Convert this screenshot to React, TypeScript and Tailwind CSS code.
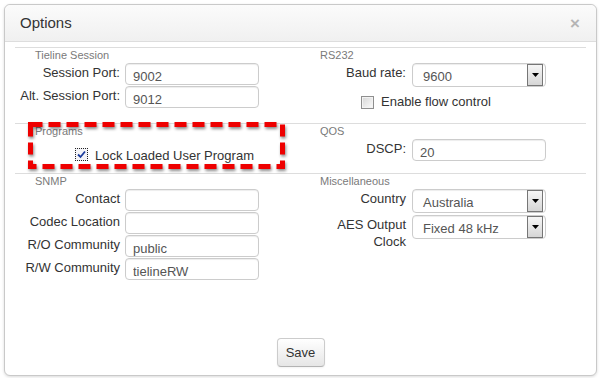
import type { ReactNode } from "react";

function SectionLabel({ children }: { children: ReactNode }) {
  return (
    <div className="h-[13px] pl-[20px] text-[11px] leading-[13px] text-[#7a7a7a]">
      {children}
    </div>
  );
}

function TextField({ label, value = "", wide = false }: { label: string; value?: string; wide?: boolean }) {
  return (
    <div className="mb-px flex items-start">
      <div
        className={
          (wide ? "w-[106px] " : "w-[105px] ") +
          "whitespace-nowrap pt-px text-right text-[13px] leading-[17px] text-[#333]"
        }
      >
        {label}
      </div>
      <input
        readOnly
        value={value}
        className={
          (wide ? "ml-[6px] " : "ml-[5px] ") +
          "h-[22px] w-[134px] rounded-[4px] border border-[#cccccc] bg-white px-[7px] pt-[4px] text-[13px] text-[#555] shadow-[inset_0_1px_1px_rgba(0,0,0,0.075)] outline-none"
        }
      />
    </div>
  );
}

function SelectField({ label, value }: { label: ReactNode; value: string }) {
  return (
    <div className="mb-[2px] flex items-start">
      <div className="w-[106px] pt-px text-right text-[13px] leading-[17px] text-[#333]">{label}</div>
      <div className="relative ml-[6px] flex h-[24px] w-[134px] items-center rounded-[4px] border border-[#cccccc] bg-white shadow-[inset_0_1px_1px_rgba(0,0,0,0.075)]">
        <span className="pl-[10px] pt-[3px] text-[13px] text-[#555]">{value}</span>
        <div className="absolute bottom-0 right-[2px] top-0 flex w-[16px] items-center justify-center border border-[#767676] bg-gradient-to-b from-[#f6f6f6] to-[#d6d6d6]">
          <svg width="7" height="4" viewBox="0 0 7 4">
            <polygon points="0,0 7,0 3.5,4" fill="#000" />
          </svg>
        </div>
      </div>
    </div>
  );
}

function Checkbox({ checked = false }: { checked?: boolean }) {
  if (checked) {
    return (
      <div className="flex h-[13px] w-[13px] items-center justify-center border border-dotted border-[#222] bg-[#f4f4f8]">
        <svg width="9" height="9" viewBox="0 0 9 9">
          <path d="M1 4.5 L3.5 7 L8 1.5" fill="none" stroke="#1a3b9c" strokeWidth="1.8" />
        </svg>
      </div>
    );
  }
  return (
    <div className="h-[13px] w-[13px] border border-[#8f8f8f] bg-gradient-to-br from-[#d6d6d6] to-[#fcfcfc] shadow-[inset_0_0_0_1px_#f3f3f3]" />
  );
}

export default function App() {
  return (
    <div className="relative h-[378px] w-[600px] bg-white pl-[4px] pt-[4px] font-['Liberation_Sans',Arial,sans-serif]">
      <div className="flex h-[372px] w-[593px] flex-col rounded-[6px] border border-[#c9c9c9] bg-white shadow-[0_1px_3px_rgba(0,0,0,0.15)]">
        {/* header */}
        <div className="flex h-[37px] items-center justify-between rounded-t-[6px] border-b border-[#dddddd] bg-gradient-to-b from-[#fbfbfb] to-[#f0f0f0] pl-[15px] pr-[16px]">
          <span className="text-[15px] text-[#333]">Options</span>
          <span className="text-[17px] font-bold leading-none text-[#b5b5b5]">×</span>
        </div>

        {/* body */}
        <div className="flex-1 px-[10px] pt-[5px]">
          <div className="grid h-[76px] grid-cols-[285px_1fr] border-t border-[#dddddd]">
            <div className="pt-px">
              <SectionLabel>Tieline Session</SectionLabel>
              <div className="mt-px">
                <TextField label="Session Port:" value="9002" />
                <TextField label="Alt. Session Port:" value="9012" />
              </div>
            </div>
            <div className="pt-px">
              <SectionLabel>RS232</SectionLabel>
              <div className="mt-px">
                <SelectField label="Baud rate:" value="9600" />
                <div className="mt-[6px] flex items-start pl-[61px]">
                  <div className="mt-[3px]">
                    <Checkbox />
                  </div>
                  <span className="ml-[7px] text-[13px] leading-[17px] text-[#333]">Enable flow control</span>
                </div>
              </div>
            </div>
          </div>

          <div className="grid h-[50px] grid-cols-[285px_1fr] border-t border-[#dddddd]">
            <div className="pt-px">
              <SectionLabel>Programs</SectionLabel>
              <div className="mt-[9px] flex items-start pl-[60px]">
                <div className="mt-px">
                  <Checkbox checked />
                </div>
                <span className="ml-[7px] text-[13px] leading-[17px] text-[#333]">Lock Loaded User Program</span>
              </div>
            </div>
            <div className="pt-px">
              <SectionLabel>QOS</SectionLabel>
              <div className="mt-px">
                <TextField label="DSCP:" value="20" wide />
              </div>
            </div>
          </div>

          <div className="grid grid-cols-[285px_1fr] border-t border-[#dddddd]">
            <div className="pt-px">
              <SectionLabel>SNMP</SectionLabel>
              <div className="mt-px">
                <TextField label="Contact" />
                <TextField label="Codec Location" />
                <TextField label="R/O Community" value="public" />
                <TextField label="R/W Community" value="tielineRW" />
              </div>
            </div>
            <div className="pt-px">
              <SectionLabel>Miscellaneous</SectionLabel>
              <div className="mt-px">
                <SelectField label="Country" value="Australia" />
                <SelectField
                  label={
                    <>
                      AES Output
                      <br />
                      Clock
                    </>
                  }
                  value="Fixed 48 kHz"
                />
              </div>
            </div>
          </div>
        </div>

        {/* footer */}
        <div className="flex justify-center pb-[8px]">
          <button className="h-[29px] w-[48px] rounded-[4px] border border-[#cccccc] border-b-[#b3b3b3] bg-gradient-to-b from-white to-[#e6e6e6] text-[13px] text-[#333] shadow-[inset_0_1px_0_rgba(255,255,255,0.2),0_1px_2px_rgba(0,0,0,0.05)]">
            Save
          </button>
        </div>
      </div>

      {/* red dashed annotation */}
      <svg
        className="pointer-events-none absolute left-0 top-0"
        width="600"
        height="378"
        style={{ filter: "drop-shadow(1px 2px 1.5px rgba(0,0,0,0.45))" }}
      >
        <rect x="30.5" y="124.5" width="252" height="42" fill="none" stroke="#ee0000" strokeWidth="5" strokeDasharray="12 6" />
      </svg>
    </div>
  );
}
